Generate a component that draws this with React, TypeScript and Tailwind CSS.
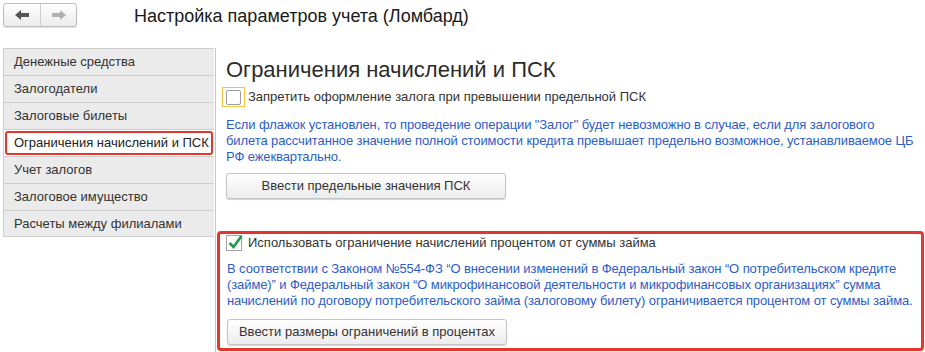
const menuItems = [
  "Денежные средства",
  "Залогодатели",
  "Залоговые билеты",
  "Ограничения начислений и ПСК",
  "Учет залогов",
  "Залоговое имущество",
  "Расчеты между филиалами",
];

function Arrow({ dir, color }: { dir: "left" | "right"; color: string }) {
  return (
    <svg width="14" height="10" viewBox="0 0 14 10" className={dir === "right" ? "scale-x-[-1]" : ""}>
      <path d="M0 5 L6 0 L6 3 L14 3 L14 7 L6 7 L6 10 Z" fill={color} />
    </svg>
  );
}

function FormButton({ children }: { children: React.ReactNode }) {
  return (
    <button className="w-[280px] h-[26px] rounded-[3px] border border-[#c4c4c4] bg-gradient-to-b from-white to-[#ececec] shadow-[0_1px_1px_rgba(0,0,0,0.18)] text-[13px] text-[#333]">
      {children}
    </button>
  );
}

export default function App() {
  return (
    <div className="w-[925px] h-[352px] bg-white overflow-hidden font-['Liberation_Sans',Arial,sans-serif] text-[#333]">
      <div className="h-[48px] flex items-start">
        <div className="mt-[3px] ml-[3px] w-[74px] h-[24px] flex rounded-[3px] border border-[#bdbdbd] bg-gradient-to-b from-white to-[#ececec] shadow-[0_1px_1px_rgba(0,0,0,0.12)]">
          <div className="w-[37px] flex items-center justify-center border-r border-[#d0d0d0]">
            <Arrow dir="left" color="#555555" />
          </div>
          <div className="flex-1 flex items-center justify-center">
            <Arrow dir="right" color="#b0b0b0" />
          </div>
        </div>
        <div className="ml-[57px] mt-[4px] text-[18px] leading-[24px] text-[#1a1a1a]">
          Настройка параметров учета (Ломбард)
        </div>
      </div>

      <div className="flex h-[304px]">
        <div className="w-[216px] border-r border-[#c6c6c6] pl-[3px] pr-[1px]">
          {menuItems.map((item, i) => (
            <div
              key={item}
              className={
                "h-[27px] border-l border-t border-[#cdcdcd] flex items-center text-[13px] " +
                (i === menuItems.length - 1 ? "border-b " : "") +
                (i === 3 ? "bg-white p-[1px]" : "bg-[#ebebeb] pl-[10px]")
              }
            >
              {i === 3 ? (
                <div className="w-full h-full rounded-[3px] border-[2.5px] border-[#e2362f] flex items-center pl-[7px] text-[#222]">
                  {item}
                </div>
              ) : (
                item
              )}
            </div>
          ))}
        </div>

        <div className="flex-1 pr-[1px]">
          <div className="pl-[10px] pr-0">
            <div className="mt-[7px] h-[29px] text-[22px] leading-[29px] text-[#2b2b2b]">
              Ограничения начислений и ПСК
            </div>
            <div className="flex items-center h-[20px] mt-[3px]">
              <div className="-ml-[4px] w-[23px] h-[20px] border border-[#f0c43c] flex items-center justify-center">
                <div className="w-[15px] h-[15px] rounded-[2px] border border-[#9c9c9c] bg-white" />
              </div>
              <span className="ml-[3px] text-[13px]">
                Запретить оформление залога при превышении предельной ПСК
              </span>
            </div>
            <p className="mt-[10px] w-[688px] text-[13px] leading-[16px] tracking-[-0.1px] text-[#2d5dc8]">
              Если флажок установлен, то проведение операции "Залог" будет невозможно в случае, если для залогового билета рассчитанное значение полной стоимости кредита превышает предельно возможное, устанавливаемое ЦБ РФ ежеквартально.
            </p>
            <div className="mt-[8px]">
              <FormButton>Ввести предельные значения ПСК</FormButton>
            </div>
          </div>

          <div className="mt-[32px] ml-[1px] rounded-[4px] border-[3px] border-[#e2362f] pl-[7px] pr-0 pb-[3px]">
            <div className="flex items-center h-[18px]">
              <div className="relative -ml-[1px] w-[16px] h-[16px] border border-[#a6a6a6] bg-white">
                <svg className="absolute left-[1px] -top-[2px]" width="15" height="16" viewBox="0 0 15 16">
                  <path d="M1.5 9 L5.5 13 L13.5 2" stroke="#1f9a4a" strokeWidth="2.6" fill="none" />
                </svg>
              </div>
              <span className="ml-[6px] text-[13px]">
                Использовать ограничение начислений процентом от суммы займа
              </span>
            </div>
            <p className="mt-[9px] text-[13px] leading-[16px] tracking-[-0.1px] text-[#2d5dc8]">
              В соответствии с Законом №554-ФЗ “О внесении изменений в Федеральный закон “О потребительском кредите (займе)” и Федеральный закон “О микрофинансовой деятельности и микрофинансовых организациях” сумма начислений по договору потребительского займа (залоговому билету) ограничивается процентом от суммы займа.
            </p>
            <div className="mt-[10px]">
              <FormButton>Ввести размеры ограничений в процентах</FormButton>
            </div>
          </div>
        </div>
      </div>
    </div>
  );
}
